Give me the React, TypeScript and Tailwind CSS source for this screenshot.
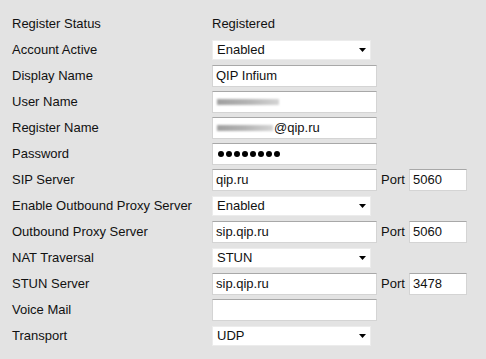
import React from "react";

type Field =
  | { kind: "text"; value: string }
  | { kind: "select"; value: string }
  | { kind: "input"; value: string; port?: string }
  | { kind: "hidden"; suffix?: string }
  | { kind: "password"; count: number };

const rows: { label: string; field: Field }[] = [
  { label: "Register Status", field: { kind: "text", value: "Registered" } },
  { label: "Account Active", field: { kind: "select", value: "Enabled" } },
  { label: "Display Name", field: { kind: "input", value: "QIP Infium" } },
  { label: "User Name", field: { kind: "hidden" } },
  { label: "Register Name", field: { kind: "hidden", suffix: "@qip.ru" } },
  { label: "Password", field: { kind: "password", count: 8 } },
  { label: "SIP Server", field: { kind: "input", value: "qip.ru", port: "5060" } },
  { label: "Enable Outbound Proxy Server", field: { kind: "select", value: "Enabled" } },
  { label: "Outbound Proxy Server", field: { kind: "input", value: "sip.qip.ru", port: "5060" } },
  { label: "NAT Traversal", field: { kind: "select", value: "STUN" } },
  { label: "STUN Server", field: { kind: "input", value: "sip.qip.ru", port: "3478" } },
  { label: "Voice Mail", field: { kind: "input", value: "" } },
  { label: "Transport", field: { kind: "select", value: "UDP" } },
];

const boxClass =
  "flex h-[22px] items-center border border-[#d4d4d4] border-t-[#a8a8a8] bg-white pl-[3px]";

function TextBox({ width, children }: { width: string; children?: React.ReactNode }) {
  return <div className={`${boxClass} ${width}`}>{children}</div>;
}

function SelectBox({ value }: { value: string }) {
  return (
    <div className="flex h-[20px] w-[159px] items-center justify-between border border-[#ececec] bg-white pl-[4px] pr-[4px]">
      <span>{value}</span>
      <svg width="7" height="4" viewBox="0 0 7 4">
        <polygon points="0,0 7,0 3.5,4" fill="#000" />
      </svg>
    </div>
  );
}

function Blurred({ width }: { width: string }) {
  return (
    <div className={`relative h-[10px] ${width}`}>
      <div className="absolute inset-x-[1px] top-[2px] h-[6px] bg-gradient-to-r from-[#a0a0a0] via-[#b4b4b4] to-[#d4d4d4] blur-[1px]" />
    </div>
  );
}

function FieldView({ field }: { field: Field }) {
  switch (field.kind) {
    case "text":
      return <span>{field.value}</span>;
    case "select":
      return <SelectBox value={field.value} />;
    case "input":
      return (
        <div className="flex items-center">
          <TextBox width="w-[165px]">{field.value}</TextBox>
          {field.port && (
            <>
              <span className="ml-[4px] w-[28px]">Port</span>
              <TextBox width="w-[58px]">{field.port}</TextBox>
            </>
          )}
        </div>
      );
    case "hidden":
      return (
        <TextBox width="w-[165px]">
          <Blurred width={field.suffix ? "w-[58px]" : "w-[64px]"} />
          {field.suffix && <span>{field.suffix}</span>}
        </TextBox>
      );
    case "password":
      return (
        <TextBox width="w-[165px]">
          <div className="flex gap-[2px] pl-[2px]">
            {Array.from({ length: field.count }).map((_, i) => (
              <span key={i} className="block h-[6px] w-[6px] rounded-full bg-black" />
            ))}
          </div>
        </TextBox>
      );
  }
}

export default function App() {
  return (
    <div
      className="h-[359px] w-[486px] bg-[#e3e3e3] pt-[11px] text-[13px] text-[#111]"
      style={{ fontFamily: '"Liberation Sans", Arial, sans-serif' }}
    >
      {rows.map((row) => (
        <div key={row.label} className="grid h-[26px] grid-cols-[212px_1fr] items-center">
          <span className="pl-[12px]">{row.label}</span>
          <div className="flex items-center">
            <FieldView field={row.field} />
          </div>
        </div>
      ))}
    </div>
  );
}
